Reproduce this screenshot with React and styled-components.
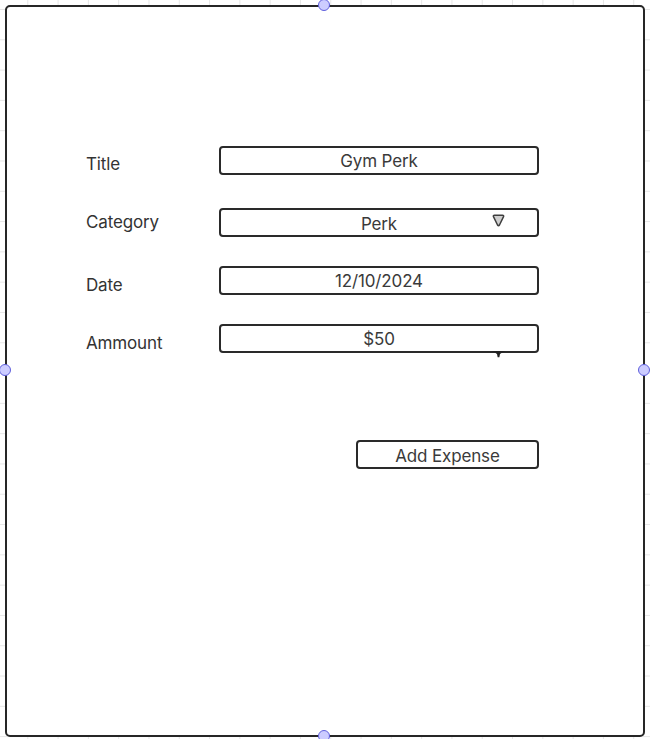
import React from "react";
import styled, { createGlobalStyle } from "styled-components";

const Global = createGlobalStyle`
  html, body { margin: 0; padding: 0; background: #fff; }
  body { font-family: Inter, "Noto Sans", sans-serif; }
  * { box-sizing: border-box; }
`;

const Canvas = styled.div`
  width: 650px;
  height: 739px;
  padding: 5px 0 0 5px;
  background-color: #fff;
  background-image:
    linear-gradient(to right, #e6e6e6 1px, transparent 1px),
    linear-gradient(to bottom, #e6e6e6 1px, transparent 1px);
  background-size: 30.3px 30.3px;
  background-position: -3px 9px;
  overflow: hidden;
`;

const Frame = styled.div`
  position: relative;
  width: 640px;
  height: 732px;
  background: #fff;
  border: 2px solid #262626;
  border-radius: 5px;
  padding: 139px 0 0 79px;
`;

const Handle = styled.span`
  position: absolute;
  width: 12px;
  height: 12px;
  border-radius: 50%;
  background: #ccccff;
  border: 1px solid #5f5fdc;
  left: ${(p) => p.$left};
  top: ${(p) => p.$top};
  transform: translate(-50%, -50%);
`;

const Form = styled.div`
  display: flex;
  flex-direction: column;
`;

const Row = styled.div`
  display: flex;
  align-items: flex-start;
  margin-top: ${(p) => p.$mt || 0}px;
`;

const Label = styled.div`
  width: 133px;
  padding-top: ${(p) => p.$pt || 8}px;
  font-size: 17px;
  line-height: 20px;
  color: #333;
  letter-spacing: -0.15px;
`;

const Field = styled.div`
  position: relative;
  width: 320px;
  height: 29px;
  border: 2px solid #2a2a2a;
  border-radius: 4px;
  display: flex;
  align-items: center;
  justify-content: center;
  font-size: 17px;
  letter-spacing: -0.15px;
  color: #3a3a3a;
  padding-top: ${(p) => p.$pt || 0}px;
`;

const Caret = styled.svg`
  position: absolute;
  right: 31px;
  top: 3px;
`;

const Peek = styled.svg`
  position: absolute;
  right: 31px;
  bottom: -8px;
`;

const Actions = styled.div`
  display: flex;
  justify-content: flex-end;
  width: 453px;
  margin-top: 87px;
`;

const Button = styled.button`
  width: 183px;
  height: 29px;
  border: 2px solid #2a2a2a;
  border-radius: 4px;
  background: #fff;
  font-family: Inter, "Noto Sans", sans-serif;
  font-size: 17px;
  letter-spacing: -0.15px;
  color: #3a3a3a;
  padding: 2px 0 0;
`;

export default function App() {
  return (
    <>
      <Global />
      <Canvas>
        <Frame>
          <Handle $left="317px" $top="-2px" />
          <Handle $left="-2px" $top="363px" />
          <Handle $left="637px" $top="363px" />
          <Handle $left="317px" $top="729px" />
          <Form>
            <Row>
              <Label $pt={8}>Title</Label>
              <Field>Gym Perk</Field>
            </Row>
            <Row $mt={33}>
              <Label $pt={4}>Category</Label>
              <Field $pt={2}>
                Perk
                <Caret width="15" height="15" viewBox="0 0 14 14">
                  <path
                    d="M2.3 3.4 Q1.8 2.2 3.2 2.2 L10.8 2.2 Q12.2 2.2 11.7 3.4 L7.9 11.2 Q7 12.6 6.1 11.2 Z"
                    fill="#cfcfcf"
                    stroke="#3e3e3e"
                    strokeWidth="1.4"
                    strokeLinejoin="round"
                  />
                </Caret>
              </Field>
            </Row>
            <Row $mt={29}>
              <Label $pt={9}>Date</Label>
              <Field>12/10/2024</Field>
            </Row>
            <Row $mt={29}>
              <Label $pt={9}>Ammount</Label>
              <Field>
                $50
                <Peek width="15" height="8" viewBox="0 0 14 7">
                  <path d="M0.5 0 L13.5 0 Q10 1.2 8.4 2.6 L7.8 5.5 L6.2 5.5 L5.6 2.6 Q4 1.2 0.5 0 Z" fill="#222" />
                </Peek>
              </Field>
            </Row>
            <Actions>
              <Button>Add Expense</Button>
            </Actions>
          </Form>
        </Frame>
      </Canvas>
    </>
  );
}
